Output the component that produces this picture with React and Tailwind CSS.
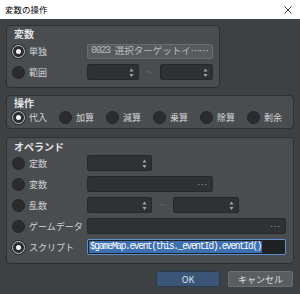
import React from 'react';

const Radio = ({ checked }) =>
  checked ? (
    <span className="flex h-[13px] w-[13px] shrink-0 items-center justify-center rounded-full border-[1.5px] border-[#c4c6c8] bg-[#2a2c2f] shadow-[0_0_0_1px_#2a2c2f]">
      <span className="h-[5px] w-[5px] rounded-full bg-[#f4f4f4]" />
    </span>
  ) : (
    <span className="h-[13px] w-[13px] shrink-0 rounded-full border border-[#232527] bg-[#2a2c2f]" />
  );

const Arrows = () => (
  <svg width="5" height="10" viewBox="0 0 5 10" className="absolute right-[4px] top-[3px]">
    <path d="M2.5 0.5 L4.5 3.5 L0.5 3.5 Z" fill="#a3a6a9" />
    <path d="M0.5 6 L4.5 6 L2.5 9 Z" fill="#a3a6a9" />
  </svg>
);

const Spin = ({ width }) => (
  <div className={`relative h-4 shrink-0 rounded-[2px] border border-[#26282a] bg-[#2f3235] ${width}`}>
    <Arrows />
  </div>
);

const Dots = () => (
  <span className="absolute right-[5px] top-[2px] text-[8px] leading-[10px] tracking-[-1px] text-[#a8abae]">···</span>
);

const Field = ({ width }) => (
  <div className={`relative h-4 shrink-0 rounded-[2px] border border-[#26282a] bg-[#2f3235] ${width}`}>
    <Dots />
  </div>
);

const Tilde = () => (
  <span className="flex w-[21px] shrink-0 justify-center text-[8px] text-[#62666a]">〜</span>
);

const Option = ({ checked, label }) => (
  <div className="flex w-[75px] shrink-0 items-center gap-[4px]">
    <Radio checked={checked} />
    <span className="text-[9px] leading-none text-[#d2d4d6]">{label}</span>
  </div>
);

const GroupTitle = ({ children }) => (
  <div className="h-[14px] pl-[3px] text-[10px] font-bold leading-[14px] text-[#e4e6e8]">{children}</div>
);

const OPS = ['代入', '加算', '減算', '乗算', '除算', '剰余'];

export default function App() {
  return (
    <div className="flex h-[294px] w-[300px] flex-col overflow-hidden bg-[#3e4144] font-['Noto_Sans_CJK_JP','Noto_Sans',sans-serif]">
      {/* title bar */}
      <div className="flex h-[19px] shrink-0 items-center justify-between bg-white pl-[5px] pr-[8px]">
        <span className="text-[8.5px] leading-none text-black">変数の操作</span>
        <svg width="8" height="8" viewBox="0 0 8 8">
          <path d="M0.5 0.5 L7.5 7.5 M7.5 0.5 L0.5 7.5" stroke="#3a3a3a" strokeWidth="1" />
        </svg>
      </div>

      <div className="flex flex-col px-[6px] pt-[6px]">
        {/* 変数 */}
        <div className="h-[63px] w-[214px] rounded-[4px] border border-[#2e3032] bg-[#4a4d50] pl-[4px] pt-[1px]">
          <GroupTitle>変数</GroupTitle>
          <div className="mt-[2px] flex flex-col gap-[5px] pl-[1px]">
            <div className="flex h-4 items-center">
              <Option checked label="単独" />
              <div className="flex h-[15px] w-[126px] items-center rounded-[2px] border border-[#6a6d70] bg-[#585b5e] pl-[3px] text-[9.5px] leading-none text-[#b8babc]">
                <span className="mr-[5px] font-['Liberation_Mono',monospace] text-[10px] tracking-[-1.3px]">0023</span>
                <span className="font-['Noto_Sans_CJK_JP',sans-serif]">選択ターゲットイ</span>
                <span className="tracking-[-1px]">……</span>
              </div>
            </div>
            <div className="flex h-4 items-center">
              <Option label="範囲" />
              <Spin width="w-[52px]" />
              <Tilde />
              <Spin width="w-[53px]" />
            </div>
          </div>
        </div>

        {/* 操作 */}
        <div className="mt-[7px] h-[34px] rounded-[4px] border border-[#2e3032] bg-[#4a4d50] pl-[4px]">
          <GroupTitle>操作</GroupTitle>
          <div className="mt-[1px] flex h-[13px] items-center pl-[1px]">
            {OPS.map((op, i) => (
              <div key={op} className="flex w-[47px] shrink-0 items-center gap-[4px]">
                <Radio checked={i === 0} />
                <span className="text-[9px] leading-none text-[#d2d4d6]">{op}</span>
              </div>
            ))}
          </div>
        </div>

        {/* オペランド */}
        <div className="mt-[8px] h-[127px] rounded-[4px] border border-[#2e3032] bg-[#4a4d50] pl-[4px] pt-[2px]">
          <GroupTitle>オペランド</GroupTitle>
          <div className="mt-[1px] flex flex-col gap-[5px] pl-[1px]">
            <div className="flex h-4 items-center">
              <Option label="定数" />
              <Spin width="w-[65px]" />
            </div>
            <div className="flex h-4 items-center">
              <Option label="変数" />
              <Field width="w-[126px]" />
            </div>
            <div className="flex h-4 items-center">
              <Option label="乱数" />
              <Spin width="w-[65px]" />
              <Tilde />
              <Spin width="w-[66px]" />
            </div>
            <div className="flex h-4 items-center">
              <Option label="ゲームデータ" />
              <Field width="w-[199px]" />
            </div>
            <div className="flex h-4 items-center">
              <Option checked label="スクリプト" />
              <div className="flex h-4 w-[199px] shrink-0 items-center overflow-hidden rounded-[2px] border border-[#5b8fd0] bg-[#1f2123] pl-[1px]">
                <span className="origin-left scale-x-[0.94] whitespace-nowrap bg-[#3d6fb3] px-[1px] font-['Liberation_Mono',monospace] text-[10px] leading-[12px] tracking-[-1.33px] text-white">
                  $gameMap.event(this._eventId).eventId()
                </span>
              </div>
            </div>
          </div>
        </div>

        {/* buttons */}
        <div className="mt-[7px] flex justify-end gap-[8px] pr-[1px]">
          <button className="flex h-4 w-[64px] items-center justify-center rounded-[2px] border border-[#2a3b50] bg-[#3a5576] text-[9px] leading-none text-[#dfe5ec]">
            OK
          </button>
          <button className="flex h-4 w-[65px] items-center justify-center rounded-[2px] border border-[#6b6e71] bg-[#5b5e61] text-[9px] leading-none text-[#dcdee0]">
            キャンセル
          </button>
        </div>
      </div>
    </div>
  );
}
